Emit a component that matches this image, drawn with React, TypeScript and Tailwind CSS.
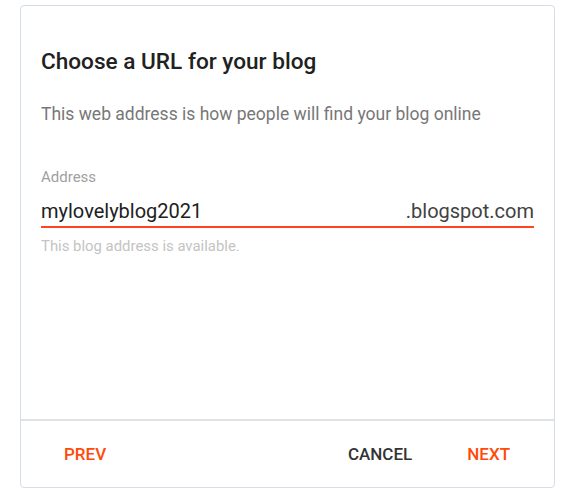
export default function App() {
  return (
    <div className="h-[500px] w-[572px] bg-white pt-[5px] pl-[20px] font-['Roboto',sans-serif]">
      <div className="flex h-[483px] w-[535px] flex-col rounded-[4px] border border-[#d5dde6] bg-white">
        <div className="flex-1 px-[20px] pt-[42px]">
          <h1 className="text-[22.6px] leading-[28px] font-medium text-[#212121]">
            Choose a URL for your blog
          </h1>
          <p className="mt-[27px] text-[17.5px] leading-[22px] text-[#777]">
            This web address is how people will find your blog online
          </p>
          <div className="mt-[43px]">
            <label className="block text-[15px] leading-[18px] text-[#a0a0a0]">
              Address
            </label>
            <div className="mt-[12px] flex items-end justify-between pb-[2px] text-[20px] leading-[26px] text-[#212121]">
              <span>mylovelyblog2021</span>
              <span className="text-[#424242]">.blogspot.com</span>
            </div>
            <div className="h-[2px] bg-[#ff4520]" />
            <p className="mt-[9px] text-[14.9px] leading-[18px] text-[#c4c4c4]">
              This blog address is available.
            </p>
          </div>
        </div>
        <div className="flex h-[68px] items-center border-t-2 border-[#e0e3e6] pr-[44px] pl-[43px] pt-[2px]">
          <button className="text-[17px] font-medium text-[#ff4a0a]">PREV</button>
          <div className="flex-1" />
          <button className="mr-[55px] text-[17px] font-medium text-[#333]">CANCEL</button>
          <button className="text-[17px] font-medium text-[#ff4a0a]">NEXT</button>
        </div>
      </div>
    </div>
  );
}
